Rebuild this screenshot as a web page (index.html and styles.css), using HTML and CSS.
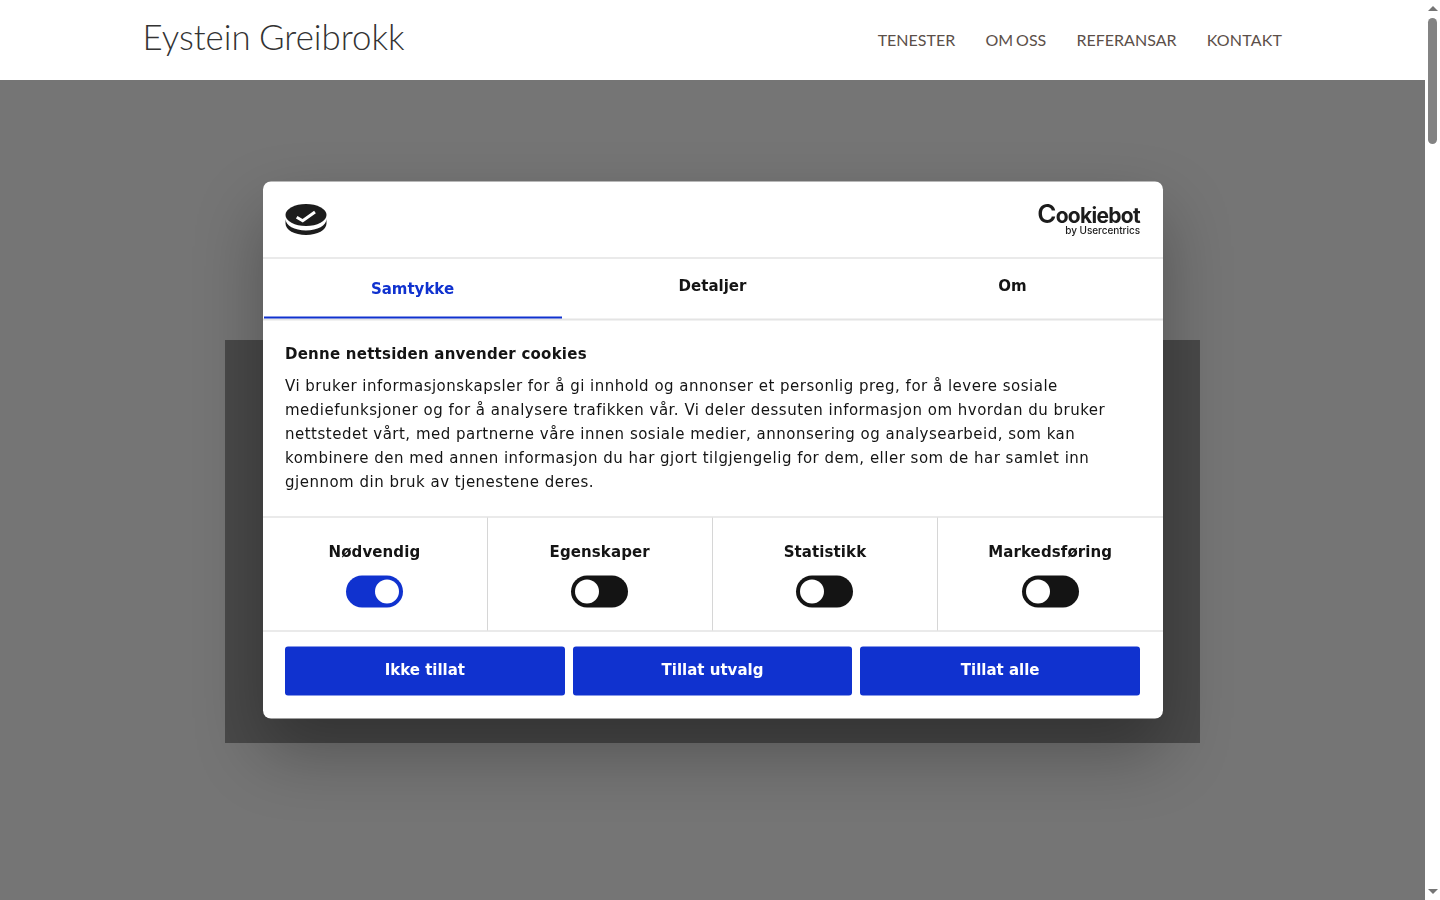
FILE: index.html
```html
<!DOCTYPE html>
<html lang="no">
<head>
<meta charset="utf-8">
<title>Eystein Greibrokk</title>
<link rel="stylesheet" href="styles.css">
</head>
<body>
<div class="app">
  <div class="page">
    <header class="site-header">
      <div class="site-title">Eystein Greibrokk</div>
      <nav class="site-nav">
        <a>Tenester</a>
        <a>Om oss</a>
        <a>Referansar</a>
        <a class="nav-last">Kontakt</a>
      </nav>
    </header>
    <main class="hero">
      <div class="hero-box"></div>
    </main>
  </div>
  <aside class="scrollbar">
    <div class="sb-arrow-up"></div>
    <div class="sb-track"><div class="sb-thumb"></div></div>
    <div class="sb-arrow-down"></div>
  </aside>
</div>

<div class="dialog" role="dialog">
  <div class="dialog-head">
    <svg class="cb-mark" viewBox="0 0 42 32" width="42" height="32" aria-hidden="true">
      <path d="M0.5 15.5 V20 C0.5 26.5 9.5 31.5 21 31.5 C32.5 31.5 41.5 26.5 41.5 20 V15.5 C41.5 22 32.5 27 21 27 C9.5 27 0.5 22 0.5 15.5 Z" fill="#1c1c1c"/>
      <ellipse cx="21" cy="11.5" rx="20.5" ry="11" fill="#1c1c1c"/>
      <path d="M11.7 13.8 L17.7 17.2 L30 8.5" fill="none" stroke="#fff" stroke-width="3"/>
    </svg>
    <div class="cb-logo">
      <span class="cb-word"><span class="cb-c">C</span>ookiebot</span>
      <span class="cb-by">by Usercentrics</span>
    </div>
  </div>
  <div class="tabs">
    <div class="tab tab-active">Samtykke</div>
    <div class="tab">Detaljer</div>
    <div class="tab">Om</div>
  </div>
  <div class="dialog-body">
    <h2 class="body-title">Denne nettsiden anvender cookies</h2>
    <p class="body-text">Vi bruker informasjonskapsler for å gi innhold og annonser et personlig preg, for å levere sosiale mediefunksjoner og for å analysere trafikken vår. Vi deler dessuten informasjon om hvordan du bruker nettstedet vårt, med partnerne våre innen sosiale medier, annonsering og analysearbeid, som kan kombinere den med annen informasjon du har gjort tilgjengelig for dem, eller som de har samlet inn gjennom din bruk av tjenestene deres.</p>
  </div>
  <div class="toggles">
    <div class="toggle-cell"><strong>Nødvendig</strong><span class="switch switch-on"></span></div>
    <div class="toggle-cell"><strong>Egenskaper</strong><span class="switch"></span></div>
    <div class="toggle-cell"><strong>Statistikk</strong><span class="switch"></span></div>
    <div class="toggle-cell"><strong>Markedsføring</strong><span class="switch"></span></div>
  </div>
  <div class="actions">
    <button class="btn">Ikke tillat</button>
    <button class="btn">Tillat utvalg</button>
    <button class="btn">Tillat alle</button>
  </div>
</div>
</body>
</html>
```
FILE: styles.css
```css
* { box-sizing: border-box; }
html, body { margin: 0; height: 100%; overflow: hidden; background: #fff; }

.app { display: flex; height: 900px; width: 1440px; }
.page { width: 1425px; display: flex; flex-direction: column; }

.site-header {
  height: 80px;
  flex: none;
  background: #fff;
  display: flex;
  align-items: center;
  justify-content: space-between;
  padding: 0 143px 0 142.5px;
  font-family: Lato, sans-serif;
}
.site-title { font-size: 34.8px; font-weight: 300; color: #333; margin-top: -8px; word-spacing: -1px; }
.site-nav { display: flex; gap: 30.3px; font-size: 16px; text-transform: uppercase; color: #5b4f49; margin-top: -2px; word-spacing: -1.2px; }
.nav-last { letter-spacing: .15px; }

.hero { flex: 1; background: #757575; padding: 260px 0 0 225px; }
.hero-box { width: 975px; height: 403px; background: #494949; }

.scrollbar { width: 15px; background: #fff; display: flex; flex-direction: column; align-items: center; }
.sb-arrow-up { width: 0; height: 0; margin-top: 6px; border: 5px solid transparent; border-top: 0; border-bottom: 5px solid #757575; }
.sb-track { flex: 1; width: 100%; padding-top: 7px; display: flex; justify-content: center; }
.sb-thumb { width: 9px; height: 126px; border-radius: 5px; background: #838383; }
.sb-arrow-down { width: 0; height: 0; margin-bottom: 6px; border: 5px solid transparent; border-bottom: 0; border-top: 5px solid #757575; }

.dialog {
  position: fixed;
  left: 712.5px;
  top: 450px;
  transform: translate(-50%, -50%);
  width: 900px;
  height: 537px;
  background: #fff;
  border-radius: 8px;
  box-shadow: 0 32px 68px rgba(0, 0, 0, .3);
  font-family: "DejaVu Sans", sans-serif;
  color: #141414;
  display: flex;
  flex-direction: column;
  overflow: hidden;
}

.dialog-head {
  height: 77px;
  flex: none;
  display: flex;
  align-items: center;
  justify-content: space-between;
  padding: 0 22.5px;
  border-bottom: 1px solid #d6d6d6;
}
.cb-logo { display: flex; flex-direction: column; align-items: flex-end; color: #1c1c1c; font-family: Inter, sans-serif; margin-top: -3px; }
.cb-word { font-size: 21px; font-weight: 700; letter-spacing: -.7px; line-height: 21px; margin-top: 1px; }
.cb-c { font-size: 26px; font-weight: 600; line-height: 21px; }
.cb-by { font-size: 10px; font-weight: 500; line-height: 9px; letter-spacing: -.05px; }

.tabs { height: 62px; flex: none; display: flex; border-bottom: 2px solid #e4e4e4; }
.tab { flex: 1; text-align: center; font-size: 15px; font-weight: 700; line-height: 18px; padding-top: 18px; }
.tab-active { color: #1032cf; padding-top: 21px; margin: 0 1px; border-bottom: 2px solid #1032cf; height: 60px; flex: none; width: 298px; }

.dialog-body { height: 196px; flex: none; padding: 21px 22.5px 0; }
.body-title { margin: 0 0 8px; font-size: 15px; line-height: 24px; font-weight: 700; letter-spacing: .24px; }
.body-text { margin: 0; font-size: 15px; line-height: 24px; letter-spacing: .495px; }

.toggles { height: 115px; flex: none; display: flex; border-top: 1px solid #d6d6d6; border-bottom: 1px solid #d6d6d6; }
.toggle-cell { flex: 1; display: flex; flex-direction: column; align-items: center; padding: 24px .4px 0 0; border-right: 1px solid #d6d6d6; font-size: 15px; }
.toggle-cell:last-child { border-right: 0; }
.toggle-cell strong { line-height: 20px; letter-spacing: .1px; }

.switch { position: relative; display: block; width: 57px; height: 32px; margin-top: 14px; border-radius: 16px; background: #141414; }
.switch::after { content: ""; position: absolute; top: 4px; left: 4px; width: 24px; height: 24px; border-radius: 50%; background: #fff; }
.switch-on { background: #1032cf; }
.switch-on::after { left: 29px; }

.actions { flex: 1; display: flex; gap: 8px; padding: 15px 22.5px 0; }
.btn {
  flex: 1;
  height: 49px;
  border: 0;
  border-radius: 3px;
  background: #1032cf;
  color: #fff;
  font-family: "DejaVu Sans", sans-serif;
  font-size: 15px;
  font-weight: 700;
  padding: 0 0 3px;
}
```
